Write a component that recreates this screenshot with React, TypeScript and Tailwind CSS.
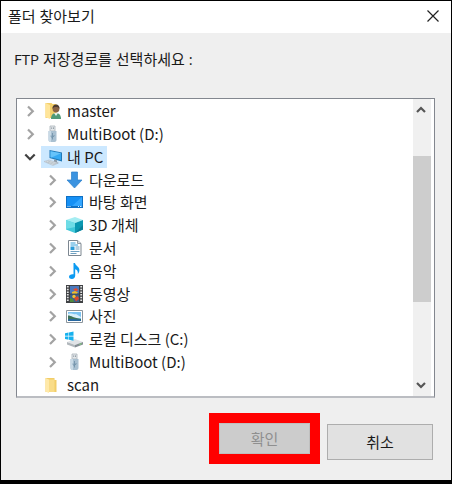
import React, { useState } from 'react';

type IconName =
  | 'user'
  | 'usb'
  | 'pc'
  | 'download'
  | 'desktop'
  | 'cube'
  | 'document'
  | 'music'
  | 'video'
  | 'picture'
  | 'disk'
  | 'folder';

interface TreeNode {
  id: string;
  label: string;
  icon: IconName;
  depth: 0 | 1;
  state: 'closed' | 'open' | 'leaf';
}

const NODES: TreeNode[] = [
  { id: 'master', label: 'master', icon: 'user', depth: 0, state: 'closed' },
  { id: 'usb', label: 'MultiBoot (D:)', icon: 'usb', depth: 0, state: 'closed' },
  { id: 'pc', label: '내 PC', icon: 'pc', depth: 0, state: 'open' },
  { id: 'downloads', label: '다운로드', icon: 'download', depth: 1, state: 'closed' },
  { id: 'desktop', label: '바탕 화면', icon: 'desktop', depth: 1, state: 'closed' },
  { id: 'objects', label: '3D 개체', icon: 'cube', depth: 1, state: 'closed' },
  { id: 'documents', label: '문서', icon: 'document', depth: 1, state: 'closed' },
  { id: 'music', label: '음악', icon: 'music', depth: 1, state: 'closed' },
  { id: 'videos', label: '동영상', icon: 'video', depth: 1, state: 'closed' },
  { id: 'pictures', label: '사진', icon: 'picture', depth: 1, state: 'closed' },
  { id: 'disk-c', label: '로컬 디스크 (C:)', icon: 'disk', depth: 1, state: 'closed' },
  { id: 'disk-d', label: 'MultiBoot (D:)', icon: 'usb', depth: 1, state: 'closed' },
  { id: 'scan', label: 'scan', icon: 'folder', depth: 0, state: 'leaf' },
];

const ICONS: Record<IconName, React.ReactNode> = {
  user: (
    <>
      <path d="M.5 1h6l1 1h4v14H.5z" fill="#f3cf6b" />
      <path d="M.5 1L5 3v14L.5 15z" fill="#ffe59a" />
      <path d="M6 17c0-4 2-6 5-6s5 2 5 6z" fill="#4f9a78" />
      <path d="M9 11h4l-2 3z" fill="#e8efe9" />
      <circle cx="11" cy="7" r="3.400" fill="#8a6446" />
      <path d="M7.500 7c-.3-3 1.200-4.500 3.500-4.500S14.800 4 14.500 7c-.8-1.500-1.500-2-3.500-2s-2.700.5-3.500 2z" fill="#4c3b30" />
    </>
  ),
  usb: (
    <>
      <path d="M5 1h5v5H5z" fill="#e4e8eb" stroke="#a9b2b9" strokeWidth=".8" />
      <path d="M6.200 2.500h1v1.300h-1zM8 2.500h1v1.300H8z" fill="#7f8b94" />
      <path d="M3.500 6h8v9c0 1.300-1 2-2 2h-4c-1 0-2-.7-2-2z" fill="#a9c0d1" />
      <path d="M3.500 6H6v11h-.5c-1 0-2-.7-2-2z" fill="#c9dae6" />
      <path d="M7.500 8v6.500M6 10.500v1.200l1.500 1M9 10v1.200l-1.500 1" fill="none" stroke="#6d8ea6" strokeWidth=".8" />
    </>
  ),
  pc: (
    <>
      <path d="M4.500 2L17 4.500v9L4.500 10z" fill="#2279b8" />
      <path d="M5.500 3.200L16 5.300v6.800L5.500 9.200z" fill="#35a9f3" />
      <path d="M5.500 3.200L16 5.300 6.500 9.500l-1-.3z" fill="#66c3fa" />
      <path d="M9 11.500l3 .8v2l2 .8-3 .8-4-1.400 2-.6z" fill="#8b9ba8" />
      <path d="M-1 13.500l5-1.500 9 3-5 2.500z" fill="#dce2e7" stroke="#aeb9c2" strokeWidth=".6" />
      <path d="M1 13.700l8.500 2.900M3 13l8.300 2.900" stroke="#a5b1bb" strokeWidth=".6" />
    </>
  ),
  download: <path d="M4.500 1h6v8H15l-7.500 8L0 9h4.500z" fill="#3b93e0" stroke="#2b7fca" strokeWidth=".7" />,
  desktop: (
    <>
      <path d="M-1 3h17v12H-1z" fill="#0f70c4" />
      <path d="M0 4h15v9H0z" fill="#1590f5" />
      <path d="M15 4v9H5z" fill="#33a6ff" />
      <path d="M.5 13.500h1M2.500 13.500h1M11 13.500h1M13 13.500h1.500" stroke="#d6efff" />
    </>
  ),
  cube: (
    <>
      <path d="M-1 4l9-3 8 3-8 3z" fill="#a5edf2" />
      <path d="M-1 4l9 3v10l-9-3.500z" fill="#41c8d9" />
      <path d="M16 4L8 7v10l8-3.500z" fill="#0b98b1" />
      <path d="M-1 4l9 3v4l-9 2z" fill="#6edce6" />
      <path d="M8 17l8-8v4.500z" fill="#087f99" />
    </>
  ),
  document: (
    <>
      <path d="M1.500 1.500h9l3.500 3v12H1.500z" fill="#fff" stroke="#7d8791" />
      <path d="M10.500 1.500v3H14" fill="#d7dde2" stroke="#7d8791" strokeWidth=".8" />
      <path d="M3.500 4h5M3.500 6H11" stroke="#36a0d9" />
      <path d="M3.500 7.500h4V11h-4z" fill="#2b9bd8" />
      <path d="M8.500 8h4M8.500 10h4M3.500 12.500h9M3.500 14.500h6" stroke="#6d9fc0" />
    </>
  ),
  music: (
    <path
      d="M6.500 1H8c.4 2.600 4.300 3.600 4.400 7 0 1.700-.7 3-1.600 4 .5-2.600-.8-4.200-2.600-4.700v6.500c0 2-1.400 3.200-3.300 3.200-1.700 0-2.900-.8-2.900-2.200 0-1.700 2-2.900 4.500-2.500z"
      fill="#0c9bf2"
    />
  ),
  video: (
    <>
      <path d="M-1 0h17v18H-1z" fill="#3f4144" />
      <path d="M.8 1v16M14.200 1v16" stroke="#e3e3e3" strokeWidth="1.800" strokeDasharray="1.500 1.200" />
      <path d="M3 1h9v7.500H3z" fill="#4a78bd" />
      <path d="M3 9.500h9V17H3z" fill="#38618f" />
      <path d="M6 4.500L9 3l2.500 2L9 6.500z" fill="#e04d32" />
      <path d="M5 7l3-1 3 1.500-1 1H5z" fill="#f0be28" />
      <circle cx="7" cy="11.500" r="1.700" fill="#f2c134" />
      <path d="M7 13l4-2 1 3-3 2.500z" fill="#d6492c" />
      <path d="M3 13l3 1 1 3H3z" fill="#4f8a3c" />
    </>
  ),
  picture: (
    <>
      <path d="M-.5 3.500h16v12h-16z" fill="#fff" stroke="#8b949b" />
      <path d="M1 5h13v9H1z" fill="#7dc4f2" />
      <path d="M1 7c3-1.500 5 1 8 0l5 3v1H1z" fill="#d9effb" />
      <path d="M1 8.500c3 0 6 2.500 13 3.500v2H1z" fill="#3d7259" />
      <path d="M1 12.500c4-1 8 0 13 .3V14H1z" fill="#2767a0" />
    </>
  ),
  disk: (
    <>
      <path d="M0 12l8-3 8 3-8 3z" fill="#e0e3e6" />
      <path d="M0 12l8 3v2.500l-8-3z" fill="#b1b7bc" />
      <path d="M16 12l-8 3v2.500l8-3z" fill="#858d93" />
      <path d="M12.500 14.500l2-.8" stroke="#7fe07a" />
      <path d="M-2 3.200l3.500-.7v3.300H-2zM2 2.400l4.500-.9v4.300H2zM-2 6.400h3.500v3.300L-2 9zM2 6.400h4.500v4.300L2 9.800z" fill="#17b1ee" />
    </>
  ),
  folder: (
    <>
      <path d="M.5 2h9v2h2v12H.5z" fill="#f2cd68" />
      <path d="M.5 2L4 3.500V17L.5 15.500z" fill="#ffe9a9" />
      <path d="M4 3.500h5.500V16H4z" fill="#f9dc88" />
    </>
  ),
};

const Chevron: React.FC<{ direction: 'right' | 'down' }> = ({ direction }) => (
  <svg viewBox="0 0 16 16" className="h-4 w-4" fill="none" strokeWidth="2.200" aria-hidden="true">
    {direction === 'right' ? (
      <path d="M6 3.500l4.800 4.700L6 13" stroke="#a3a3a3" />
    ) : (
      <path d="M3.300 5.500L8 10.200l4.700-4.700" stroke="#404040" />
    )}
  </svg>
);

const ScrollArrow: React.FC<{ direction: 'up' | 'down' }> = ({ direction }) => (
  <svg viewBox="0 0 16 16" className="h-4 w-4" fill="none" stroke="#555" strokeWidth="2.200" aria-hidden="true">
    <path d={direction === 'up' ? 'M3 10l4-4 4 4' : 'M3 6l4 4 4-4'} />
  </svg>
);

const TreeRow: React.FC<{
  node: TreeNode;
  selected: boolean;
  onSelect: (id: string) => void;
}> = ({ node, selected, onSelect }) => (
  <li
    role="treeitem"
    aria-selected={selected}
    className={`flex min-h-0 items-stretch gap-[3px] ${node.depth === 1 ? 'pl-[27px]' : 'pl-[5px]'}`}
  >
    {node.state === 'leaf' ? (
      <span className="w-4" />
    ) : (
      <button type="button" aria-label={`${node.label} 확장`} className="flex w-4 items-center">
        <Chevron direction={node.state === 'open' ? 'down' : 'right'} />
      </button>
    )}
    <button
      type="button"
      onClick={() => onSelect(node.id)}
      className={`flex items-center gap-1 px-1 leading-5 whitespace-nowrap ${selected ? 'bg-[#cce8ff]' : ''}`}
    >
      <svg viewBox="0 0 18 18" className="h-[18px] w-[18px] shrink-0 overflow-visible" aria-hidden="true">
        {ICONS[node.icon]}
      </svg>
      <span>{node.label}</span>
    </button>
  </li>
);

export default function App() {
  const [selectedId, setSelectedId] = useState('pc');

  return (
    <div className="border border-b-4 border-black bg-[#efefef] font-['Open_Sans','Noto_Sans_CJK_KR',sans-serif] text-[15px] leading-5 text-[#1a1a1a]">
      <header className="flex h-8 items-center justify-between bg-white pr-3 pb-[3px] pl-[7px]">
        <h1>폴더 찾아보기</h1>
        <button type="button" aria-label="닫기">
          <svg viewBox="0 0 12 12" className="h-3 w-3" stroke="#222" strokeWidth="1.200" aria-hidden="true">
            <path d="M.5.5l11 11M11.500.5l-11 11" />
          </svg>
        </button>
      </header>

      <main className="px-[15px] pt-4 pb-4">
        <p id="tree-label" className="-ml-[2px] h-[49px]">
          FTP 저장경로를 선택하세요 :
        </p>

        <div className="mr-px flex border border-b-2 border-[#83878f] border-b-[#bbbdc2] bg-white">
          <ul
            role="tree"
            aria-labelledby="tree-label"
            className="mt-px grid h-[296px] flex-1 auto-rows-fr font-['Noto_Sans_CJK_KR',sans-serif]"
          >
            {NODES.map((node) => (
              <TreeRow key={node.id} node={node} selected={node.id === selectedId} onSelect={setSelectedId} />
            ))}
          </ul>

          {/* Scrollbar */}
          <div className="mr-[3px] flex w-[18px] flex-col bg-[#f0f0f0]">
            <button type="button" aria-label="위로" className="flex h-[22px] items-center justify-center">
              <ScrollArrow direction="up" />
            </button>
            <div className="flex-1 pt-[35px]">
              <div className="h-[146px] bg-[#cdcdcd]" />
            </div>
            <button type="button" aria-label="아래로" className="flex h-[22px] items-center justify-center">
              <ScrollArrow direction="down" />
            </button>
          </div>
        </div>

        <div className="mt-[15px] mr-[3px] flex items-end justify-end gap-[7px]">
          <div className="border-[10px] border-[#ff0000]">
            <button type="button" disabled className="block h-[31px] w-[91px] border border-[#bfbfbf] bg-[#cccccc] text-[#8f8f8f]">
              확인
            </button>
          </div>
          <button type="button" className="mb-1 h-9 w-[106px] border border-[#adadad] bg-[#e1e1e1]">
            취소
          </button>
        </div>
      </main>
    </div>
  );
}
